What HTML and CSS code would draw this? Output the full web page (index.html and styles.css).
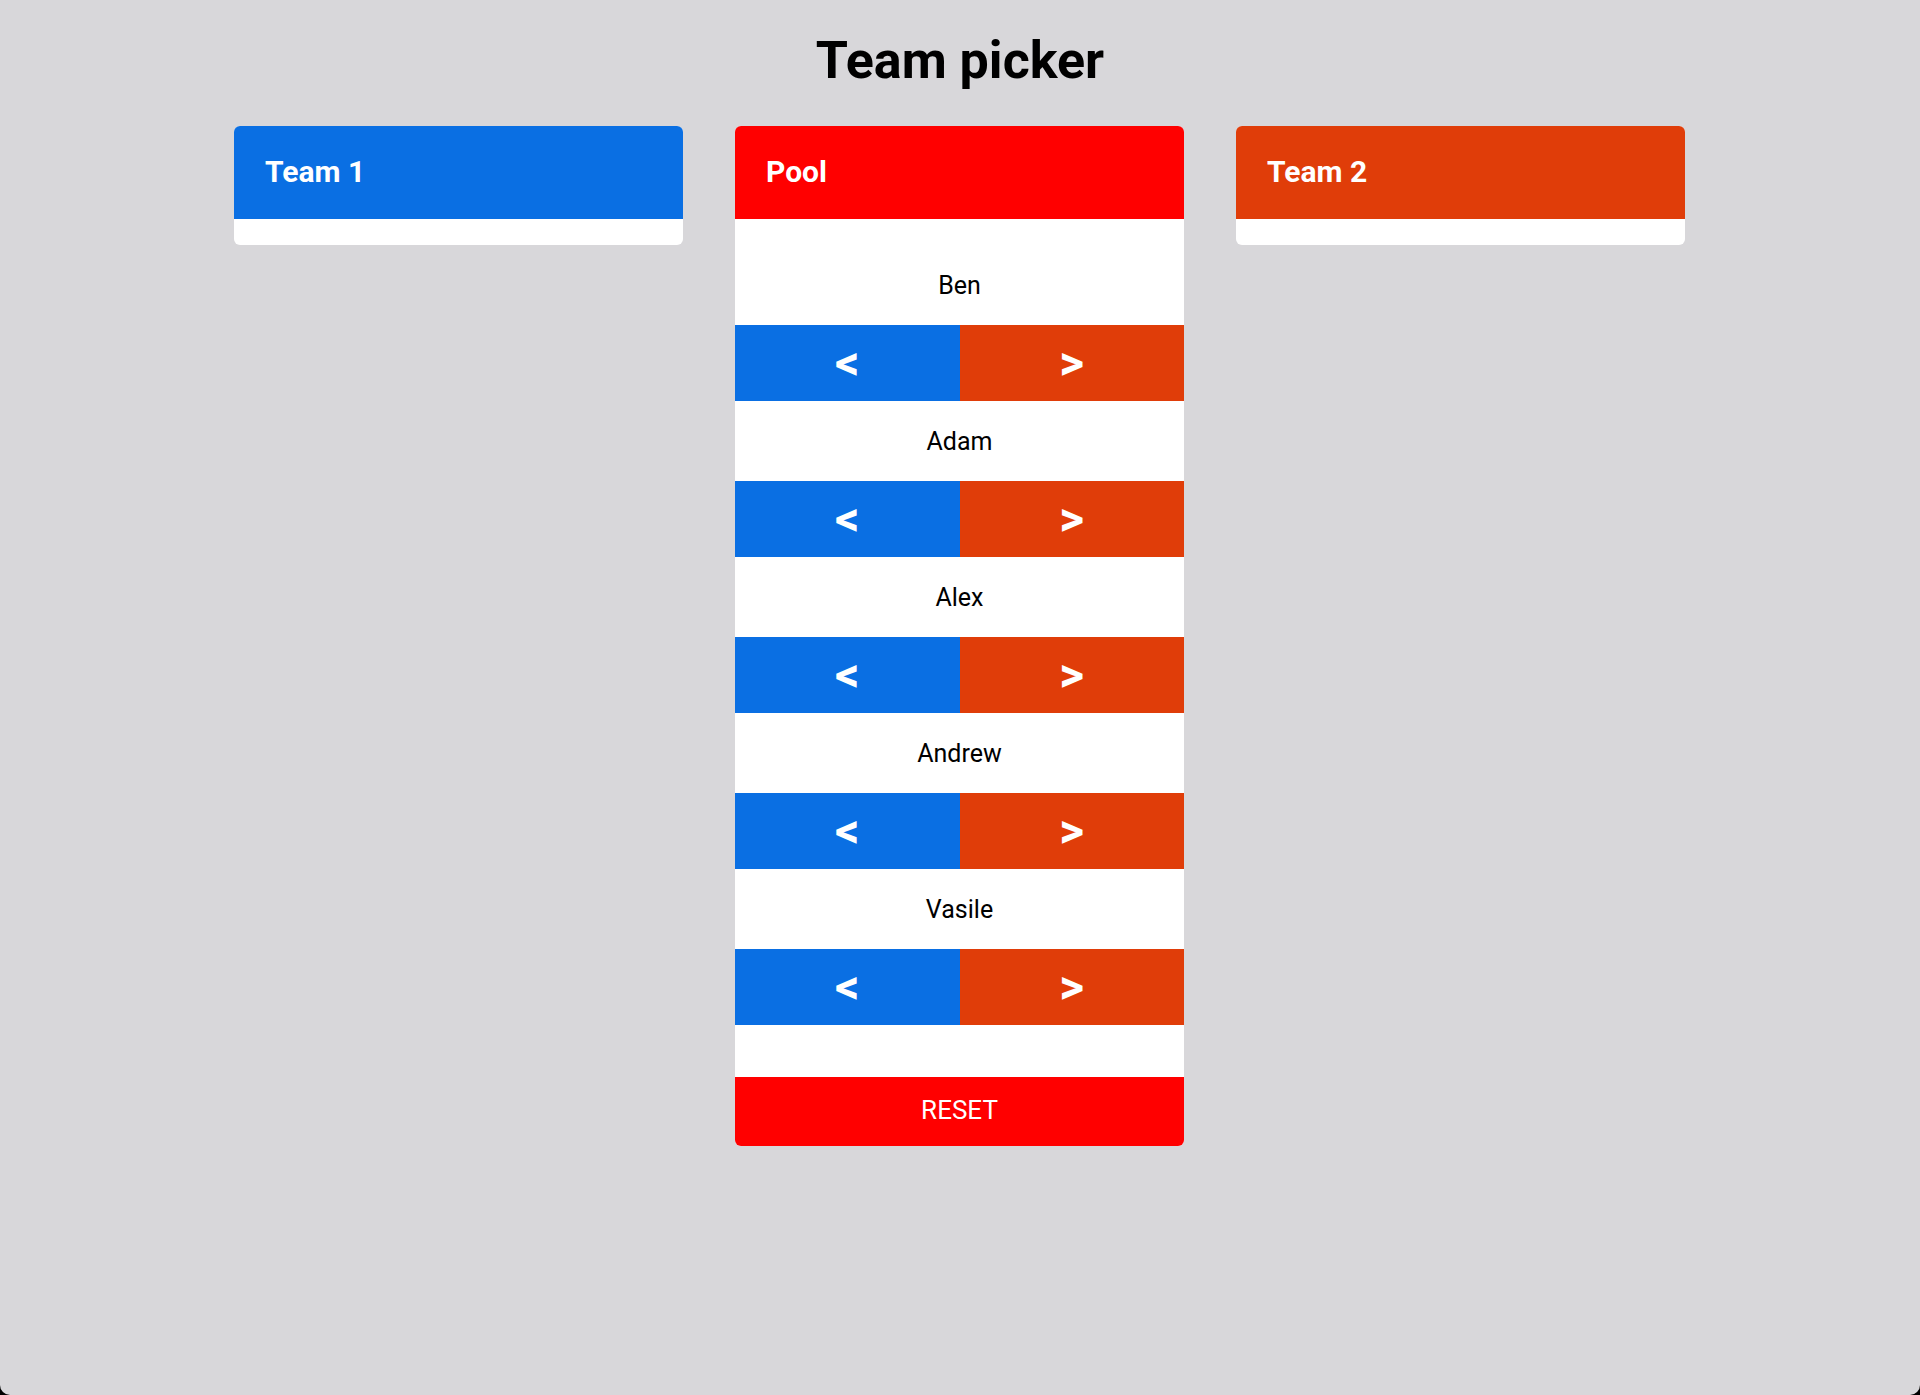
FILE: index.html
```html
<!DOCTYPE html>
<html lang="en">
<head>
<meta charset="utf-8">
<title>Team picker</title>
<link rel="stylesheet" href="styles.css">
</head>
<body>
<h1 class="title">Team picker</h1>
<main class="board">
  <section class="card">
    <header class="card-head team1">Team 1</header>
    <div class="list"></div>
  </section>
  <section class="card pool">
    <header class="card-head pool-head">Pool</header>
    <div class="list pool-list">
      <div class="player">Ben</div>
      <div class="moves"><button class="move left">&lt;</button><button class="move right">&gt;</button></div>
      <div class="player">Adam</div>
      <div class="moves"><button class="move left">&lt;</button><button class="move right">&gt;</button></div>
      <div class="player">Alex</div>
      <div class="moves"><button class="move left">&lt;</button><button class="move right">&gt;</button></div>
      <div class="player">Andrew</div>
      <div class="moves"><button class="move left">&lt;</button><button class="move right">&gt;</button></div>
      <div class="player">Vasile</div>
      <div class="moves"><button class="move left">&lt;</button><button class="move right">&gt;</button></div>
    </div>
    <button class="reset">RESET</button>
  </section>
  <section class="card">
    <header class="card-head team2">Team 2</header>
    <div class="list"></div>
  </section>
</main>
</body>
</html>
```

FILE: styles.css
```css
html {
  background: #000;
  height: 100%;
}
body {
  margin: 0;
  height: 100vh;
  box-sizing: border-box;
  background: #d8d7da;
  border-radius: 0 0 10px 10px;
  font-family: Roboto, "Liberation Sans", Arial, sans-serif;
  padding-top: 35px;
  overflow: hidden;
}
.title {
  margin: 0;
  font-size: 52px;
  line-height: 52px;
  font-weight: 700;
  text-align: center;
  color: #000;
}
.board {
  display: grid;
  grid-template-columns: repeat(3, 449px);
  column-gap: 52px;
  justify-content: center;
  align-items: start;
  margin-top: 39px;
  padding-right: 1px;
}
.card {
  background: #fff;
  border-radius: 6px;
  overflow: hidden;
  display: flex;
  flex-direction: column;
}
.card-head {
  height: 93px;
  box-sizing: border-box;
  display: flex;
  align-items: center;
  padding: 0 0 2px 31px;
  color: #fff;
  font-size: 30px;
  font-weight: 700;
}
.team1 { background: #0a6fe3; }
.pool-head { background: #ff0000; }
.team2 { background: #e03d09; }
.list {
  padding-top: 26px;
}
.pool-list {
  padding-bottom: 52px;
}
.player {
  height: 80px;
  display: flex;
  align-items: center;
  justify-content: center;
  font-size: 25px;
  color: #000;
}
.moves {
  display: flex;
  height: 76px;
}
.move {
  flex: 1;
  border: 0;
  margin: 0;
  padding: 0;
  color: #fff;
  font-family: Roboto, "Liberation Sans", Arial, sans-serif;
  font-size: 48px;
  font-weight: 700;
  line-height: 1;
  cursor: pointer;
}
.move.left { background: #0a6fe3; }
.move.right { background: #e03d09; }
.reset {
  height: 69px;
  border: 0;
  margin: 0;
  padding: 0 0 4px;
  background: #ff0000;
  color: #fff;
  font-family: Roboto, "Liberation Sans", Arial, sans-serif;
  font-size: 26px;
  font-weight: 400;
  cursor: pointer;
}
```
